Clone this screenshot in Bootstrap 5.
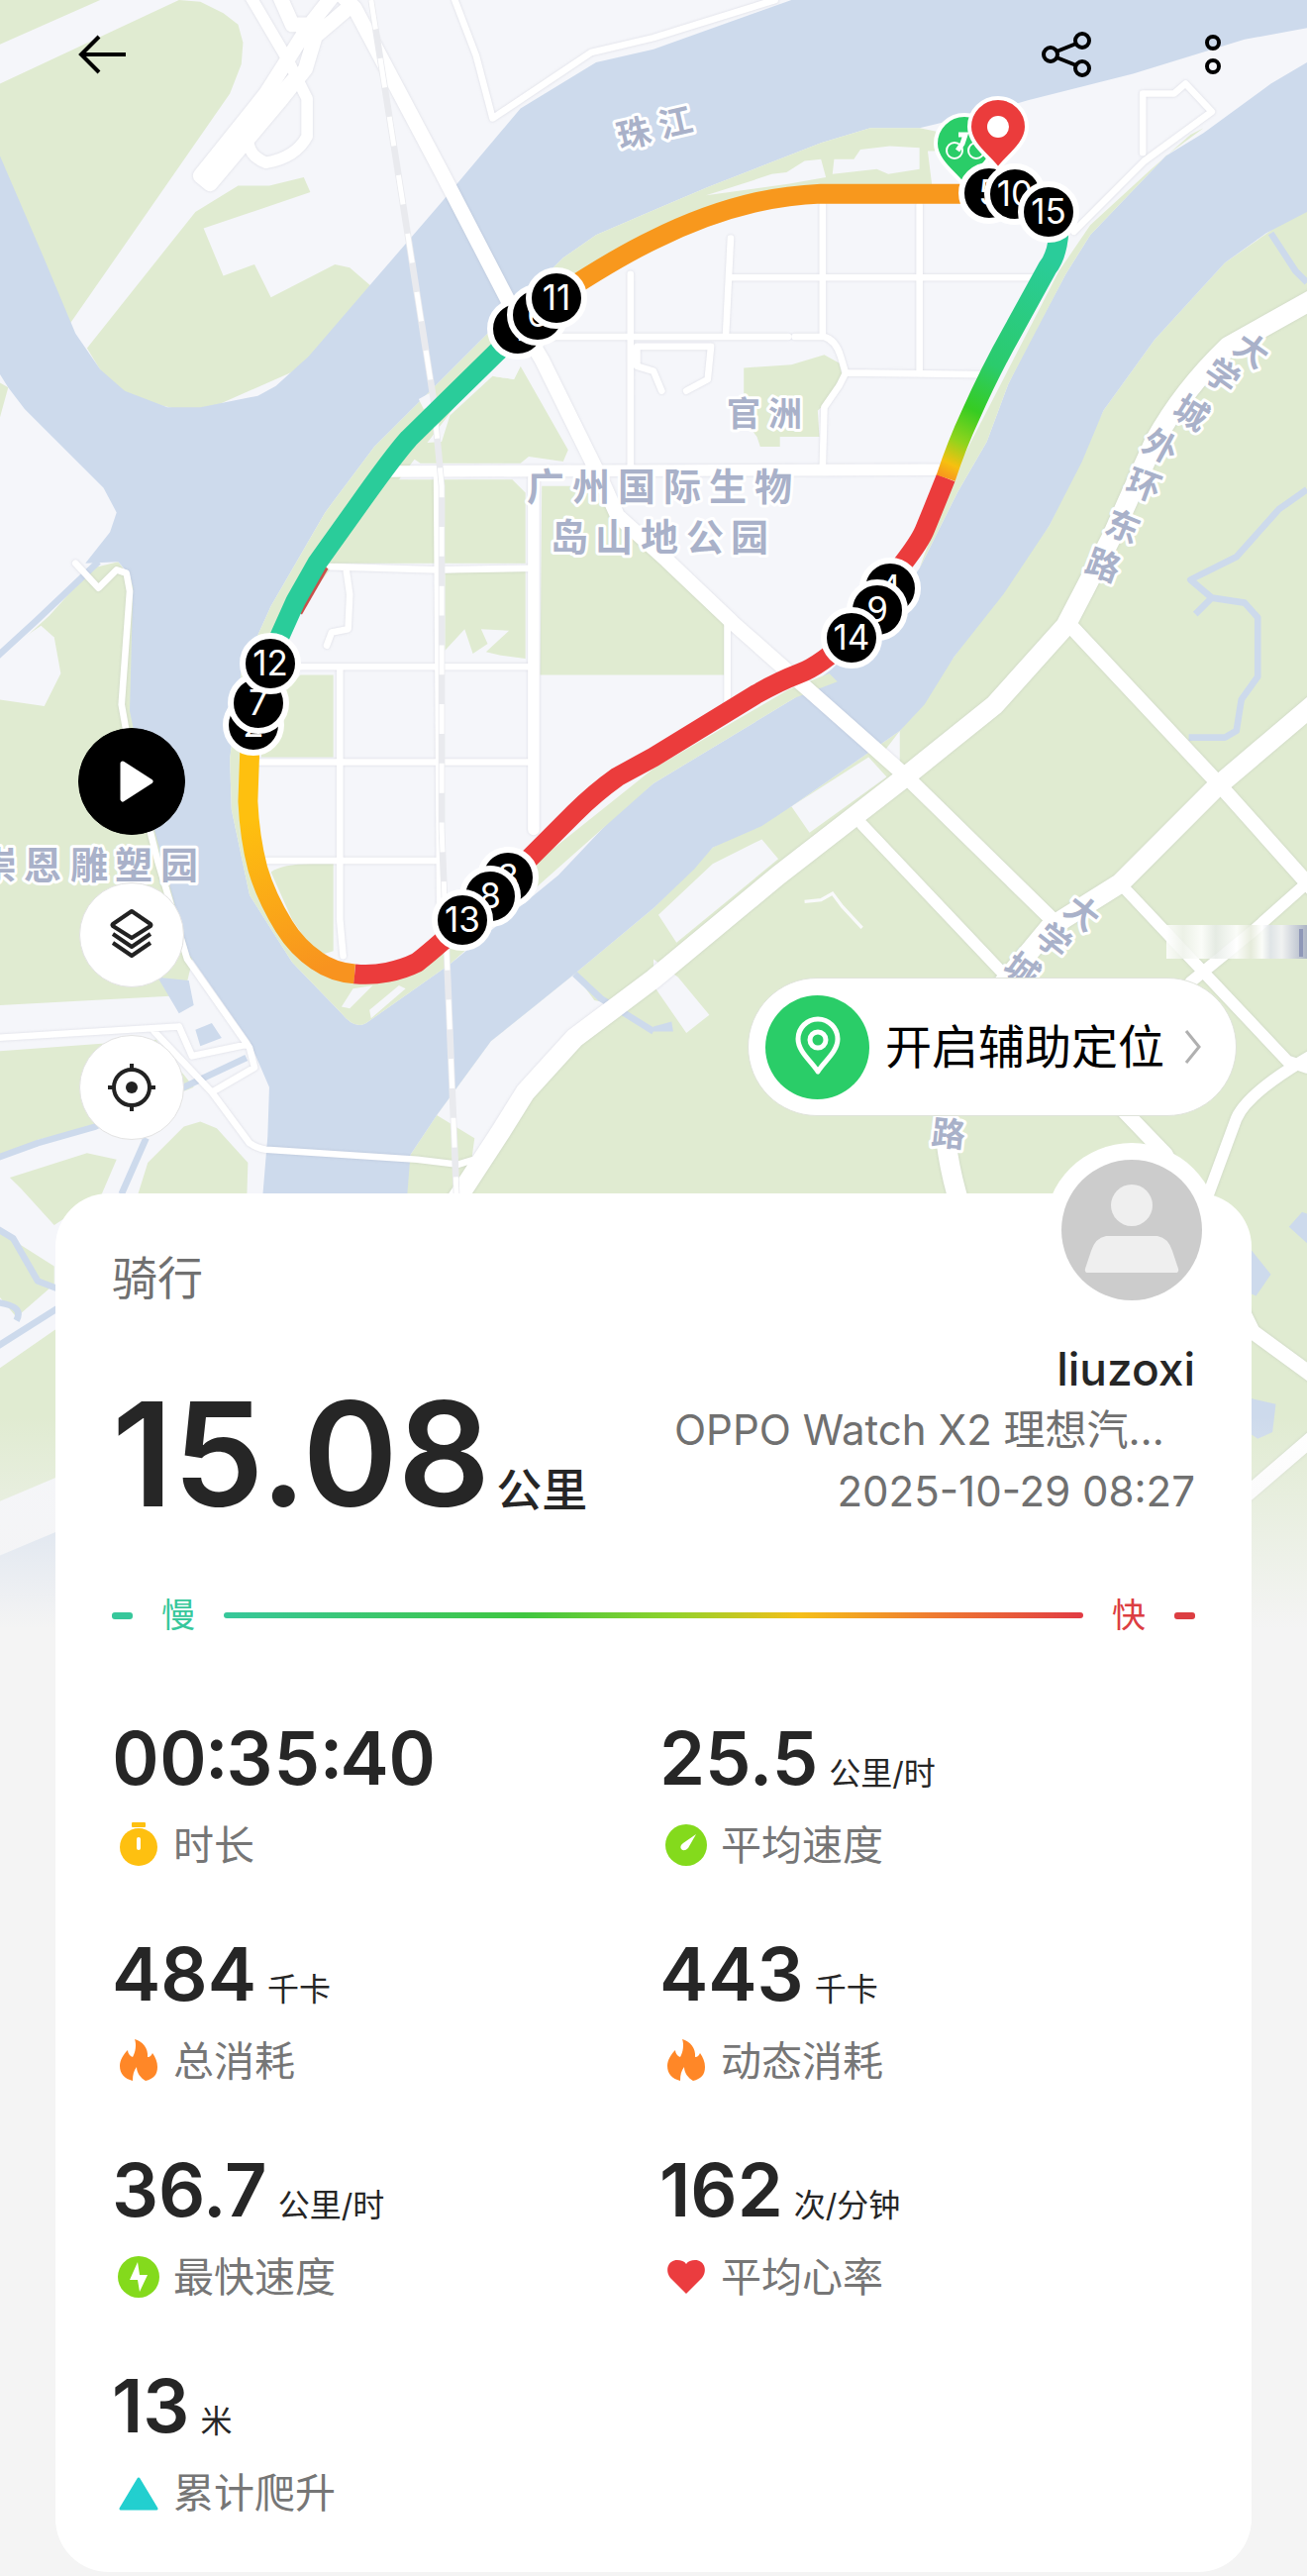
<!DOCTYPE html>
<html lang="zh-CN">
<head>
<meta charset="utf-8">
<meta name="viewport" content="width=device-width, initial-scale=1">
<title>骑行 15.08 公里</title>
<link href="https://cdn.jsdelivr.net/npm/bootstrap@5.3.0/dist/css/bootstrap.min.css" rel="stylesheet">
<style>
body{background:#f4f4f4;color:#262626;font-family:Inter,"Noto Sans CJK SC",sans-serif;overflow-x:hidden}
.city-map{height:auto;z-index:0}
.screen-body{z-index:1}
.top-bar{height:110px;padding:0 79px}
.icon-btn{background:none;border:0;padding:0;line-height:0;color:#000}
.top-actions{gap:92px;padding-right:6px}
.map-tools{padding:625px 71px 0 79px}
.tool-stack{gap:48px}
.tool-btn{width:108px;height:108px;border-radius:50%;border:1px solid #e3e3e3;background:#fff;padding:0;line-height:0;color:#222}
.tool-btn.small-tool{width:106px;height:106px}
.tool-btn.play{background:#000;border-color:#000;color:#fff}
.locate-pill{height:140px;border-radius:70px;background:#fff;border:1px solid #dfe3da;padding:0 34px 0 17px;font-size:47px;line-height:60px;color:#000;margin-bottom:24px}
.pin-disc{width:105px;height:105px;border-radius:50%;background:#2acd68;margin-right:16px}
.chev{margin-left:20px}
.summary{margin:54px 56px 1px;padding:52px 57px 50px;border-radius:54px;background:#fff}
.avatar-ring{position:absolute;top:-51px;right:33px;width:176px;height:176px;border-radius:50%;background:#fff;padding:17px;line-height:0}
.sport-name{font-size:46px;line-height:66px;color:#707070;margin:0;font-weight:400}
.head-row{margin-top:28px}
.clock-value{font-variant-numeric:tabular-nums}
.distance{font-size:146px;line-height:138px;font-weight:600}
.distance-unit{font-size:46px;line-height:60px;font-weight:500;margin-left:6px}
.user-block{width:526px}
.user-name{font-size:46px;line-height:62px;font-weight:500}
.user-line{font-size:42px;line-height:62px;color:#707070}
.pace-row{margin-top:68px;gap:29px;font-size:34px;line-height:52px}
.pace-dash{width:21px;height:7px;border-radius:3px}
.pace-bar{height:6px;border-radius:3px;background:linear-gradient(90deg,#37c79b 0%,#3fc640 35%,#8fd22b 52%,#f5bf18 67%,#ef7d30 82%,#e13b44 100%)}
.slow{color:#37c79b}.slow-bg{background:#37c79b}
.fast{color:#dc3e42}.fast-bg{background:#dc3e42}
.metrics{--bs-gutter-x:12px;--bs-gutter-y:60px;margin-top:18px}
.metric-value{font-size:74px;line-height:80px;font-weight:600}
.metric-unit{font-size:32px;font-weight:400;line-height:40px;margin-left:11px}
.metric-label{font-size:41px;line-height:60px;margin-top:18px;gap:8px;color:#767676}
.map-label{font-family:"Noto Sans CJK SC",sans-serif;font-weight:700;fill:#a9b1c9;stroke:#fff;stroke-width:6px;stroke-linejoin:round;paint-order:stroke;text-anchor:middle}
.fs-park{font-size:38px}.fs-place{font-size:34px}.fs-road{font-size:34px}
.km circle{fill:#000;stroke:#fff;stroke-width:6}
.km text{font-size:35px;font-weight:400;fill:#fff;text-anchor:middle}
.roads path{fill:none;stroke:#fff;stroke-linejoin:round;stroke-linecap:round}
.roads{filter:drop-shadow(0 0 1px rgba(120,120,140,.22))}
.land{fill:#f5f6fa}.green{fill:#e0ebd1}.water{fill:#cddaec}
.stream{fill:none;stroke:#cddaec;stroke-width:4;stroke-linejoin:round}
.ride path{fill:none;stroke-width:12;stroke-linejoin:round}
.ride .earlier-lap{stroke-width:9}
</style>
<script src="https://cdn.jsdelivr.net/npm/bootstrap@5.3.0/dist/js/bootstrap.bundle.min.js"></script>
</head>
<body>
<div class="position-relative">
<svg class="city-map position-absolute top-0 start-0 w-100" viewBox="0 0 1320 1680" role="img" aria-label="骑行轨迹地图">
<defs>
<linearGradient id="fade" x1="0" y1="0" x2="0" y2="1"><stop offset="0" stop-color="#f4f4f4" stop-opacity="0"/><stop offset="1" stop-color="#f4f4f4"/></linearGradient>
<linearGradient id="gWest" gradientUnits="userSpaceOnUse" x1="151" y1="500" x2="190" y2="593"><stop offset="0" stop-color="#fec00f"/><stop offset="1" stop-color="#f8931f"/></linearGradient>
<linearGradient id="gEast" gradientUnits="userSpaceOnUse" x1="642" y1="158" x2="576" y2="291"><stop offset="0" stop-color="#2acc9a"/><stop offset=".5" stop-color="#2bcb6c"/><stop offset=".7" stop-color="#36cc22"/><stop offset=".84" stop-color="#8fd41c"/><stop offset=".94" stop-color="#f6c010"/><stop offset="1" stop-color="#f8981d"/></linearGradient>
<linearGradient id="smear" x1="0" y1="0" x2="1" y2="0"><stop offset="0" stop-color="#fff"/><stop offset=".12" stop-color="#eef2ea"/><stop offset=".25" stop-color="#fff"/><stop offset=".35" stop-color="#e6ebe6"/><stop offset=".5" stop-color="#fff"/><stop offset=".6" stop-color="#e6ebdc"/><stop offset=".68" stop-color="#fff"/><stop offset=".74" stop-color="#dfe3ea"/><stop offset=".82" stop-color="#f3f3f7"/><stop offset="1" stop-color="#a3abc2"/></linearGradient>
</defs>
<rect class="land" width="1320" height="1680"/>
<g transform="scale(1.6583)">
<path class="green" d="M0 0H61L0 27ZM0 51L109 0L122 1L136 8L145 15L148 26L147 39L140 57L42 198L0 100ZM53 212L119 129L145 113L164 113L185 108L189 117L124 139L136 168L155 161L165 181L204 161L213 163L228 176L188 222L120 252L70 240ZM0 233L5 236L0 254Z"/>
<path class="green" d="M0 402L30 375L56 346L72 342L84 358L82 433L97 505L118 581L112 606L0 612ZM0 640L95 633L118 662L60 686L23 694L0 705ZM6 717L53 702L71 706L62 727L33 746L13 724ZM90 708L112 686L122 683L132 687L151 708L150 740H80ZM0 750L33 771V782L10 802L0 790ZM33 810L0 833V914L50 893V800Z"/>
<path class="land" d="M0 398L25 381L33 388L37 410L27 430L0 426Z"/>
<path class="green" d="M240 760L250 703L266 679L299 634L350 593L398 553L434 516L482 491L548 445L581 400L639 320L672 250L703 207L746 160L796 125V1013H240Z"/>
<path class="land" d="M299 634L350 593L362 609L376 612L305 681L287 708L289 693L266 679ZM401 557L434 526L464 511L474 523L412 574ZM482 491L529 461L540 473L493 507ZM548 445V470L535 462ZM398 584L413 595L432 618L418 629L398 600ZM796 178L740 212L735 222L796 182Z"/>
<path d="M490 549L500 548L507 544L513 552L525 565" fill="none" stroke="#f9fafb" stroke-width="2"/>
<path class="water" d="M482 0L398 30L363 38L317 66L269 123L225 174L188 217L168 235L157 241L122 248L102 248L76 238L61 225L46 203L25 153L0 95V228L5 236L15 249L63 297L71 312L67 324L52 343L72 342L79 350L81 358L79 433L94 505L109 560L115 581L152 634L164 662L163 692L159 740H247L250 703L266 679L299 634L350 593L398 553L423 529L434 516L464 503L482 491L548 445L563 429L581 400L611 362L639 320L659 281L672 250L703 207L746 160L771 142L796 129V38L774 51L733 81L710 95L664 143L649 167L626 210L614 234L601 269L583 300L560 346L540 375L507 407L484 425L398 477L376 495L340 533L274 587L223 623Q216 627 208 617L178 586L152 545L141 493L140 462L147 409L165 369L198 312L228 272L254 246L343 157L363 143L398 128L431 114L500 87L530 78L560 78L606 67L626 61L690 45L758 24L796 17V0ZM96 595L115 597L118 612L109 617ZM119 627L129 623L135 632L122 637ZM785 747L793 738L796 739V757ZM762 761L774 776L765 789L760 787ZM760 851L777 855L775 872L766 876L760 872ZM0 947L36 932V1013H0ZM398 625L409 622L410 628H398Z"/>
<path class="stream" d="M60 342L22 378L-2 400M-2 705L23 696L58 686L112 662L150 644M89 693L74 727M-2 748L8 754L23 780L36 785M-2 820L36 796M-2 793Q15 795 10 804M350 593L366 608L398 628M796 298L779 310L753 339L725 353L738 364L758 367L766 376V412L756 426L753 445L746 449H724M738 364L728 374M774 142L789 165L796 172" />
<path class="green" d="M343 157L363 143L398 128L431 114L500 87L530 78L560 78L580 82L580 117H480L398 140L302 215L171 386L150 460L156 530L178 568L216 597L265 580L324 527L398 468L480 420L505 410L510 415L484 425L398 477L274 587L223 623Q216 627 208 617L178 586L152 545L141 493L140 462L147 409L165 369L198 312L228 272L254 246ZM733 78L725 82L700 104L664 137L645 165L580 291L560 346L583 300L601 269L614 234L649 167L664 143L710 95Z"/>
<path class="green" d="M317 223L346 274L343 281L322 278L317 282H256L250 278L254 270L269 269L274 253L300 229L313 231ZM240 292H312L320 300V343H203ZM271 349L320 346V401L305 399L296 397L310 384L293 383L297 392L288 398L283 383L271 396ZM330 296H366L376 314L441 374V411H329ZM183 411H203V461H159L165 430ZM165 531Q172 526 190 526H203V579L193 582L178 560ZM453 224L482 222L502 216L511 221L513 229L506 243L498 250L499 266H475V272H463L461 266L453 255Z"/>
<path class="land" d="M508 97L520 97L524 91L542 89L560 90V103L541 106L534 103L507 106ZM430 119L458 110L470 106L479 105L490 98L500 97L503 108L480 112ZM565 92H585V120L568 116ZM208 613L215 602L227 600L213 614ZM225 615L243 600L247 602L226 620ZM300 229L317 223L313 231ZM255 243L264 238L266 247L258 249Z"/>
<g class="roads">
<path stroke-width="4" d="M277 0L290 34L300 72L360 32L398 23L472 0M384 167V284M330 205H480M445 169H635M445 145L442 205M501 125V205M560 125V225M484 205H502Q509 207 512 217L515 227L511 235L502 248L501 284M515 227L598 228M266 290L268 572M201 345L266 347L325 346M183 406H325M157 464H325M163 524H266M207 406V560L209 582M443 374V430M211 348L213 362L212 383L202 385L199 393M388 223V211H433L431 231L418 238M696 93V57L715 57L722 51L738 68L697 98L654 141M46 343L60 358L71 347L77 349L79 360L74 429L79 457L96 524L114 584L152 638L155 650L129 665M-3 632L109 625L117 643L150 636M94 628L129 665L152 696Q156 699 162 700L254 706L279 709L292 705M388 223L398 226L403 238"/>
<path stroke-width="7" d="M238 287L573 286M325 290V505M152 -3L175 36L187 60V83Q180 96 162 99Q148 94 152 78L178 48M525 502L615 597M685 541L784 646L796 650M800 534L763 567L725 598M800 642Q760 665 753 681L736 727"/>
<path stroke-width="9" d="M203 -3L188 16L162 57L122 107L128 112L170 62L186 42L192 22L212 5M208 -3L216 5L269 105L312 188L330 219L368 296L376 314L406 341L446 379L550 471L645 564M652 381L741 476L800 542M685 677L710 703L763 811L800 838M800 875L757 912M170 -3L178 15H190"/>
<path stroke-width="12" d="M275 735L305 689L320 665L350 632L398 596L474 533L550 474L606 429L649 381L660 360L677 327L703 269Q720 238 748 211L800 182M800 429L741 479L682 538L639 565L610 600L576 650Q571 690 585 735"/>
</g>
<path d="M226 0L264 243L269 296V505L278 727" fill="none" stroke="#e9eaee" stroke-width="4"/>
<path d="M226 0L264 243L269 296V505L278 727" fill="none" stroke="#fff" stroke-width="3" stroke-dasharray="18 18"/>
</g>
<rect x="1178" y="934" width="142" height="34" fill="url(#smear)" opacity=".85"/>
<rect x="1312" y="938" width="4" height="28" fill="#8f98b8"/>
<rect x="0" y="1430" width="1320" height="215" fill="url(#fade)"/>
<rect x="0" y="1644" width="1320" height="36" fill="#f4f4f4"/>
<g class="map-label fs-park">
<text x="551 597 643 689 735 781" y="505">广州国际生物</text>
<text x="575 620 666 712 757" y="556">岛山地公园</text>
<text x="-2 43 90 135 181" y="887">崇恩雕塑园</text>
</g>
<g class="map-label fs-place">
<text x="751 793" y="430">官洲</text>
<text transform="translate(640 134) rotate(-13)" y="13">珠</text><text transform="translate(682 123) rotate(-13)" y="13">江</text>
</g>
<g class="map-label fs-road">
<text transform="translate(1264 354) rotate(35)" y="12">大</text><text transform="translate(1234 380) rotate(35)" y="12">学</text><text transform="translate(1203 417) rotate(32)" y="12">城</text><text transform="translate(1172 451) rotate(28)" y="12">外</text><text transform="translate(1155 490) rotate(20)" y="12">环</text><text transform="translate(1134 532) rotate(22)" y="12">东</text><text transform="translate(1114 571) rotate(20)" y="12">路</text>
<text transform="translate(1093 922) rotate(38)" y="12">大</text><text transform="translate(1064 950) rotate(38)" y="12">学</text><text transform="translate(1032 980) rotate(36)" y="12">城</text><text transform="translate(958 1145) rotate(6)" y="12">路</text>
</g>
<g class="ride" transform="scale(1.6583)">
<path class="earlier-lap" stroke="#c9504a" d="M196 344L180 372"/>
<path stroke="#f8981d" d="M600 118L500 118Q480 119 461 123Q430 130 398 146Q375 157 340 180"/>
<path stroke="#2acc9a" d="M315 202L302 215L249 267Q240 277 218 308L193 343L180 366L171 386L165 400"/>
<path stroke="url(#gWest)" d="M153 445L152 460L151 488Q152 510 157 529Q162 546 173 564Q181 577 193 585Q203 592 216 593"/>
<path stroke="#eb3c3c" d="M216 593Q226 594 236 592Q246 590 254 586Q262 580 282 562M310 535L324 521L350 495Q362 483 376 473L398 461L460 423Q474 415 487 410Q500 405 518 388M541 360L550 343Q560 330 563 323Q570 306 576 291"/>
<path stroke="url(#gEast)" d="M576 291Q583 270 591 253Q603 226 616 203L638 163Q646 153 645 130"/>
</g>
<g transform="translate(974 145)"><path d="M0 43C-8 31-29 18-29 0A29 29 0 1 1 29 0C29 18 8 31 0 43Z" fill="#2acd68" stroke="#fff" stroke-width="4"/><g fill="none" stroke="#fff" stroke-width="2"><circle cx="-10" cy="7" r="8"/><circle cx="12" cy="7" r="8"/></g><path d="M-6-9H1L-2 0L-7 7" fill="none" stroke="#fff" stroke-width="5"/></g>
<g class="km">
<g transform="translate(523 332)"><circle r="28"/><text y="12">1</text></g>
<g transform="translate(543 318)"><circle r="28"/><text y="12">6</text></g>
<g transform="translate(562 301)"><circle r="28"/><text y="12">11</text></g>
<g transform="translate(256 732)"><circle r="28"/><text y="12">2</text></g>
<g transform="translate(261 710)"><circle r="28"/><text y="12">7</text></g>
<g transform="translate(273 670)"><circle r="28"/><text y="12">12</text></g>
<g transform="translate(513 886)"><circle r="28"/><text y="12">3</text></g>
<g transform="translate(495 905)"><circle r="28"/><text y="12">8</text></g>
<g transform="translate(467 929)"><circle r="28"/><text y="12">13</text></g>
<g transform="translate(899 594)"><circle r="28"/><text y="12">4</text></g>
<g transform="translate(886 616)"><circle r="28"/><text y="12">9</text></g>
<g transform="translate(860 644)"><circle r="28"/><text y="12">14</text></g>
<g transform="translate(999 195)"><circle r="28"/><text y="12">5</text></g>
<g transform="translate(1025 196)"><circle r="28"/><text y="12">10</text></g>
<g transform="translate(1059 214)"><circle r="28"/><text y="12">15</text></g>
</g>
<g transform="translate(1008 128)"><path d="M0 43C-8 31-29 18-29 0A29 29 0 1 1 29 0C29 18 8 31 0 43Z" fill="#eb3c3c" stroke="#fff" stroke-width="4"/><circle r="11" fill="#fff"/></g>
</svg>

<div class="screen-body position-relative">
<header class="top-bar d-flex justify-content-between align-items-center">
<button class="icon-btn" type="button" aria-label="返回"><svg width="50" height="42" viewBox="0 0 50 42" fill="none" stroke="#000" stroke-width="4"><path d="M48 21H3M21 3L3 21L21 39"/></svg></button>
<div class="top-actions d-flex align-items-center">
<button class="icon-btn" type="button" aria-label="分享"><svg width="72" height="48" viewBox="0 0 72 48" fill="none" stroke="#000" stroke-width="4"><circle cx="10" cy="24" r="7"/><circle cx="42" cy="10" r="7"/><circle cx="42" cy="38" r="7"/><path d="M16 21L36 13M16 27L36 35"/></svg></button>
<button class="icon-btn" type="button" aria-label="更多"><svg width="20" height="48" viewBox="0 0 20 48" fill="none" stroke="#000" stroke-width="4"><circle cx="10" cy="12" r="6"/><circle cx="10" cy="36" r="6"/></svg></button>
</div>
</header>

<section class="map-tools d-flex justify-content-between align-items-end">
<div class="tool-stack d-flex flex-column align-items-center">
<button class="tool-btn play" type="button" aria-label="播放轨迹"><svg width="60" height="60" viewBox="0 0 60 60"><path d="M20 12L48 30L20 48Z" transform="translate(1 0)" fill="#fff" stroke="#fff" stroke-width="5" stroke-linejoin="round"/></svg></button>
<button class="tool-btn small-tool" type="button" aria-label="图层"><svg width="56" height="56" viewBox="0 0 56 56" fill="none" stroke="#222" stroke-width="4" stroke-linejoin="round"><path d="M28 4L47 17Q48 18 47 19L28 31L9 19Q8 18 9 17ZM9 27L28 40L47 27M9 36L28 49L47 36"/></svg></button>
<button class="tool-btn small-tool" type="button" aria-label="定位"><svg width="56" height="56" viewBox="0 0 56 56" fill="none" stroke="#222" stroke-width="4"><circle cx="28" cy="28" r="18"/><circle cx="28" cy="28" r="6" fill="#222" stroke="none"/><path d="M28 4V12M28 44V52M4 28H12M44 28H52"/></svg></button>
</div>
<button class="locate-pill d-flex align-items-center" type="button">
<span class="pin-disc d-flex align-items-center justify-content-center"><svg width="60" height="70" viewBox="0 0 60 70" fill="none" stroke="#fff" stroke-width="5" stroke-linejoin="round"><path d="M30 60C24 50 10 40 10 27A20 20 0 0 1 50 27C50 40 36 50 30 60Z"/><circle cx="30" cy="28" r="8"/></svg></span>
<span>开启辅助定位</span>
<svg class="chev" width="18" height="36" viewBox="0 0 18 36" fill="none" stroke="#b0b0b0" stroke-width="3"><path d="M2 2L15 18L2 34"/></svg>
</button>
</section>

<main class="summary position-relative">
<div class="avatar-ring"><svg width="142" height="142" viewBox="0 0 142 142" role="img" aria-label="头像"><circle cx="71" cy="71" r="71" fill="#ccc"/><circle cx="71" cy="46" r="21" fill="#efefef"/><path d="M45 77H97Q108 79 112 92L118 110Q119 114 115 114H27Q23 114 24 110L30 92Q34 79 45 77Z" fill="#efefef"/></svg></div>
<h1 class="sport-name">骑行</h1>
<div class="head-row d-flex justify-content-between align-items-end">
<div class="d-flex align-items-baseline"><span class="distance">15.08</span><span class="distance-unit">公里</span></div>
<div class="user-block">
<div class="user-name text-end">liuzoxi</div>
<div class="user-line text-nowrap">OPPO Watch X2 理想汽…</div>
<div class="user-line text-end">2025-10-29 08:27</div>
</div>
</div>
<div class="pace-row d-flex align-items-center">
<span class="pace-dash slow-bg"></span><span class="slow">慢</span><span class="pace-bar flex-grow-1"></span><span class="fast">快</span><span class="pace-dash fast-bg"></span>
</div>
<div class="row row-cols-2 metrics">
<div class="col"><div class="metric-value clock-value">00:35:40</div><div class="metric-label d-flex align-items-center"><svg width="54" height="54" viewBox="0 0 54 54"><circle cx="27" cy="29" r="19" fill="#fec010"/><rect x="20" y="4" width="14" height="5" rx="1" fill="#fec010"/><rect x="25" y="19" width="4" height="13" rx="2" fill="#fff"/></svg>时长</div></div>
<div class="col"><div class="metric-value">25.5<span class="metric-unit">公里/时</span></div><div class="metric-label d-flex align-items-center"><svg width="54" height="54" viewBox="0 0 54 54"><circle cx="27" cy="27" r="21" fill="#84da1c"/><path d="M37 16L29 30Q25 34 22 31Q20 28 24 25Z" fill="#fff"/></svg>平均速度</div></div>
<div class="col"><div class="metric-value">484<span class="metric-unit">千卡</span></div><div class="metric-label d-flex align-items-center"><svg width="54" height="54" viewBox="0 0 54 54"><path d="M23 5C31 7 37 14 36 23C39 23 40 21 41 19C44 23 46 28 46 33C46 41 42 45 34 47C29 44 25 39 25 33C22 37 21 41 21 47C13 45 8 40 8 32C8 26 12 20 16 16C16 19 18 22 21 23C24 18 25 10 23 5Z" fill="#ff8727"/></svg>总消耗</div></div>
<div class="col"><div class="metric-value">443<span class="metric-unit">千卡</span></div><div class="metric-label d-flex align-items-center"><svg width="54" height="54" viewBox="0 0 54 54"><path d="M23 5C31 7 37 14 36 23C39 23 40 21 41 19C44 23 46 28 46 33C46 41 42 45 34 47C29 44 25 39 25 33C22 37 21 41 21 47C13 45 8 40 8 32C8 26 12 20 16 16C16 19 18 22 21 23C24 18 25 10 23 5Z" fill="#ff8727"/></svg>动态消耗</div></div>
<div class="col"><div class="metric-value">36.7<span class="metric-unit">公里/时</span></div><div class="metric-label d-flex align-items-center"><svg width="54" height="54" viewBox="0 0 54 54"><circle cx="27" cy="27" r="21" fill="#84da1c"/><path d="M26 12L18 30H26L28 42L36 25H28Z" fill="#fff"/></svg>最快速度</div></div>
<div class="col"><div class="metric-value">162<span class="metric-unit">次/分钟</span></div><div class="metric-label d-flex align-items-center"><svg width="54" height="54" viewBox="0 0 54 54"><path d="M27 44L11 28C5 20 9 10 18 10C22 10 25 11 27 14C29 11 32 10 36 10C45 10 49 20 43 28Z" fill="#eb3c3f"/></svg>平均心率</div></div>
<div class="col"><div class="metric-value">13<span class="metric-unit">米</span></div><div class="metric-label d-flex align-items-center"><svg width="54" height="54" viewBox="0 0 54 54"><path d="M27 13L45 43H9Z" fill="#22cfcf" stroke="#22cfcf" stroke-width="3" stroke-linejoin="round"/></svg>累计爬升</div></div>
</div>
</main>
</div>
</div>
</body>
</html>
